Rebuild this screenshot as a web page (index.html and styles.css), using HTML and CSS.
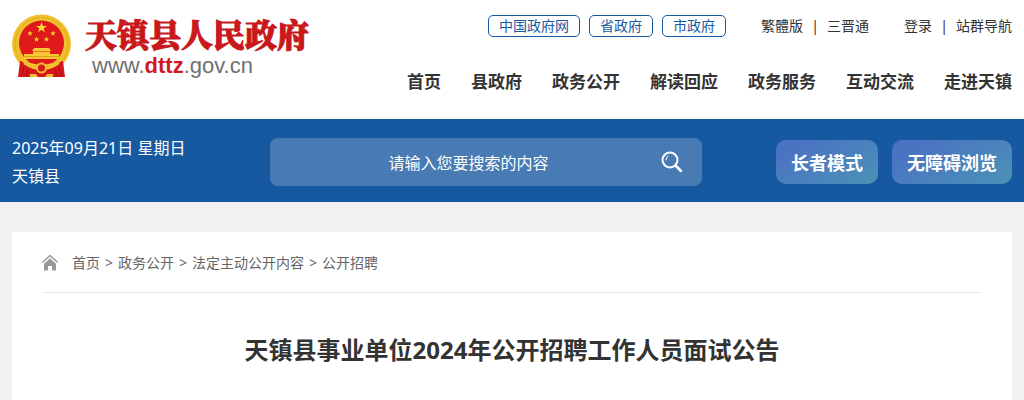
FILE: index.html
```html
<!DOCTYPE html>
<html lang="zh-CN">
<head>
    <meta charset="UTF-8">
    <meta name="viewport" content="width=device-width, initial-scale=1.0">
    <title>天镇县事业单位2024年公开招聘工作人员面试公告</title>
    <link rel="stylesheet" href="styles.css">
</head>
<body>
    <header class="header">
        <a class="logo" href="#">
            <svg class="emblem" viewBox="0 0 60 64" aria-hidden="true">
                <circle cx="29.500" cy="30" r="29.500" fill="#f0c02c"/>
                <circle cx="29.500" cy="30" r="26.500" fill="none" stroke="#e3ab22" stroke-width="1"/>
                <circle cx="29.500" cy="29" r="22.500" fill="#e0191b"/>
                <path d="M29.500 8l1.300 3.900h4.200l-3.400 2.400 1.300 4-3.400-2.500-3.400 2.500 1.300-4-3.400-2.400h4.200z" fill="#fbdc3c"/>
                <g fill="#fbd338">
                    <path d="M18 16.500l.7 2h2.100l-1.700 1.200.7 2-1.800-1.200-1.700 1.200.6-2-1.700-1.200h2.100z"/>
                    <path d="M41 16.500l.7 2h2.100l-1.700 1.200.7 2-1.800-1.200-1.700 1.200.6-2-1.700-1.200h2.100z"/>
                    <path d="M24.500 22.500l.7 2h2.100l-1.700 1.200.7 2-1.800-1.200-1.700 1.200.6-2-1.700-1.200h2.100z"/>
                    <path d="M34.500 22.500l.7 2h2.100l-1.700 1.200.7 2-1.800-1.200-1.700 1.200.6-2-1.700-1.200h2.100z"/>
                </g>
                <path d="M22 34h15l2 3H20zM21 37.500h17v3H21zM12 40h35v5H12z" fill="#f7c832"/>
                <path d="M12 42.500h35" stroke="#de9c20" stroke-width="1"/>
                <path d="M8 47l10 1 6 4q5.500-4 11 0l6-4 10-1 2 16H6z" fill="#d8171b"/>
                <path d="M7 44q10 8 22.500 8T52 44M12 49q9 6 17.500 6T47 49" fill="none" stroke="#f3c02e" stroke-width="2.500"/>
                <circle cx="29.500" cy="54" r="4.500" fill="#d8171b" stroke="#f3c02e" stroke-width="2"/>
                <path d="M12 54l-3 9M16 55l-2 8M47 54l3 9M43 55l2 8" stroke="#a90e12" stroke-width="1"/>
                <path d="M18 60h6l2 3h-8zM41 60h-6l-2 3h8z" fill="#f3c02e"/>
            </svg>
            <span class="logo-text">
                <strong class="logo-name">天镇县人民政府</strong>
                <span class="logo-url">www.<b>dttz</b>.gov.cn</span>
            </span>
        </a>
        <div class="header-right">
            <div class="top-links">
                <div class="gov-links">
                    <a href="#">中国政府网</a>
                    <a href="#">省政府</a>
                    <a href="#">市政府</a>
                </div>
                <div class="link-group">
                    <a href="#">繁體版</a>
                    <span>|</span>
                    <a href="#">三晋通</a>
                </div>
                <div class="link-group">
                    <a href="#">登录</a>
                    <span>|</span>
                    <a href="#">站群导航</a>
                </div>
            </div>
            <nav class="nav">
                <a href="#">首页</a>
                <a href="#">县政府</a>
                <a href="#">政务公开</a>
                <a href="#">解读回应</a>
                <a href="#">政务服务</a>
                <a href="#">互动交流</a>
                <a href="#">走进天镇</a>
            </nav>
        </div>
    </header>

    <div class="bar">
        <div class="date">
            <div>2025年09月21日 星期日</div>
            <div>天镇县</div>
        </div>
        <form class="search">
            <input type="text" aria-label="搜索" placeholder="请输入您要搜索的内容">
            <button type="button" aria-label="搜索">
                <svg width="22" height="22" viewBox="0 0 22 22" fill="none" stroke="#fff" stroke-linecap="round" aria-hidden="true">
                    <circle cx="9" cy="9" r="7.500" stroke-width="2"/>
                    <path d="M14.500 14.500L20 20" stroke-width="2.500"/>
                    <path d="M5 9q0-3 2-4" stroke-width="1"/>
                </svg>
            </button>
        </form>
        <div class="modes">
            <button type="button">长者模式</button>
            <button type="button">无障碍浏览</button>
        </div>
    </div>

    <main class="content">
        <nav class="crumbs">
            <svg width="16" height="17" viewBox="0 0 16 17" aria-hidden="true">
                <path d="M.8 8L8 1.500 15.200 8" fill="none" stroke="#999" stroke-width="1.500" stroke-linecap="round"/>
                <path d="M8 4.200l6 5.500v6.800h-4v-4.500H6v4.500H2V9.700z" fill="#999"/>
            </svg>
            <a href="#">首页</a> &gt;
            <a href="#">政务公开</a> &gt;
            <a href="#">法定主动公开内容</a> &gt;
            <a href="#">公开招聘</a>
        </nav>
        <h1>天镇县事业单位2024年公开招聘工作人员面试公告</h1>
    </main>
</body>
</html>
```

FILE: styles.css
```css
* {
    box-sizing: border-box;
}
body {
    margin: 0;
    font-family: "Noto Sans", "Noto Sans CJK SC", sans-serif;
    font-size: 14px;
    color: #333;
    background-color: #f1f1f1;
}
a {
    color: inherit;
    text-decoration: none;
}
input, button {
    font-family: inherit;
    border: 0;
}

/* Header */
.header {
    display: flex;
    justify-content: space-between;
    padding: 14px 12px 25px;
    background-color: #fff;
}
.logo {
    display: flex;
    gap: 13px;
}
.emblem {
    width: 60px;
    height: 64px;
}
.logo-text {
    display: flex;
    flex-direction: column;
}
.logo-name {
    font-family: "Noto Serif CJK SC", "Noto Sans CJK SC", serif;
    font-size: 32px;
    font-weight: 900;
    line-height: 38px;
    color: #c9181b;
    -webkit-text-stroke: 1px #c9181b;
}
.logo-url {
    padding-left: 7px;
    font-family: "Liberation Sans", Arial, sans-serif;
    font-size: 22px;
    line-height: 28px;
    color: #707070;
}
.logo-url b {
    color: #d0191c;
}
.header-right {
    display: flex;
    flex-direction: column;
    align-items: flex-end;
    gap: 31px;
}
.top-links {
    display: flex;
    align-items: center;
    gap: 35px;
    line-height: 24px;
}
.gov-links {
    display: flex;
    gap: 9px;
}
.gov-links a {
    padding: 0 10px;
    border: 1px solid #1759a0;
    border-radius: 5px;
    line-height: 20px;
    color: #1759a0;
}
.link-group {
    display: flex;
    gap: 8px;
}
.link-group span {
    width: 8px;
    text-align: center;
}
.nav {
    display: flex;
    gap: 30px;
    font-size: 17px;
    font-weight: bold;
    line-height: 25px;
}

/* Blue search bar */
.bar {
    display: grid;
    grid-template-columns: 258px 1fr auto;
    align-items: center;
    padding: 15px 12px 12px;
    color: #fff;
    background-color: #1759a0;
}
.date {
    font-size: 16px;
    line-height: 28px;
}
.search {
    display: flex;
    height: 48px;
    margin-right: 74px;
    border-radius: 8px;
    background-color: #487ab3;
}
.search input {
    flex: 1;
    min-width: 0;
    padding: 2px 0 0 24px;
    font-size: 16px;
    text-align: center;
    color: #fff;
    background: none;
}
.search input::placeholder {
    color: #fff;
    opacity: 1;
}
.search button {
    display: flex;
    align-items: center;
    padding: 0 19px 0 18px;
    background: none;
    cursor: pointer;
}
.modes {
    display: flex;
    gap: 14px;
}
.modes button {
    height: 44px;
    padding: 0 15px;
    border-radius: 10px;
    font-size: 18px;
    font-weight: bold;
    color: #fff;
    background: linear-gradient(150deg, #4a74c2 20%, #4a8fb8 90%);
    cursor: pointer;
}

/* Article */
.content {
    margin: 30px 12px 0;
    padding: 0 30px 32px;
    background-color: #fff;
}
.crumbs {
    display: flex;
    align-items: center;
    gap: 5px;
    height: 61px;
    border-bottom: 1px solid #e8e8e8;
    color: #666;
}
.crumbs svg {
    margin-right: 9px;
}
h1 {
    margin: 39px 0 0;
    font-size: 24px;
    line-height: 36px;
    text-align: center;
}
```
